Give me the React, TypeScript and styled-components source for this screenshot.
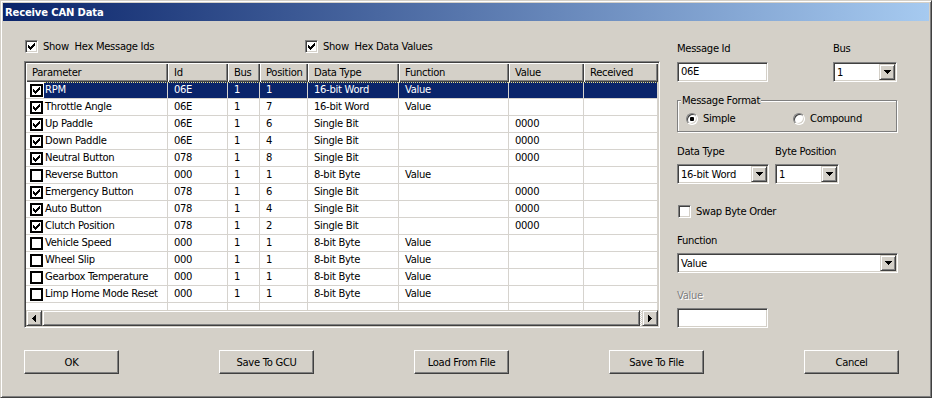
import React from "react";
import styled, { createGlobalStyle, css } from "styled-components";

const face = "#d4d0c8";
const shadow = "#808080";
const dark = "#404040";
const navy = "#0a246a";
const grid = "#d6d3ce";

const GlobalStyle = createGlobalStyle`
  html, body { margin: 0; padding: 0; background: ${face}; }
  body {
    font-family: "DejaVu Sans", "Liberation Sans", sans-serif;
    font-size: 10px;
    letter-spacing: -0.3px;
    color: #000;
  }
  * { box-sizing: border-box; }
`;

const raised = css`
  background: ${face};
  border: 1px solid;
  border-color: #fff ${dark} ${dark} #fff;
  box-shadow: inset -1px -1px 0 ${shadow};
`;

const sunken = css`
  background: #fff;
  border: 1px solid;
  border-color: ${shadow} #fff #fff ${shadow};
  box-shadow: inset 1px 1px 0 ${dark}, inset -1px -1px 0 ${face};
`;

const Window = styled.div`
  width: 932px;
  height: 398px;
  display: flex;
  flex-direction: column;
  padding: 2px;
  background: ${face};
  border: 1px solid;
  border-color: ${face} ${dark} ${dark} ${face};
  box-shadow: inset 1px 1px 0 #fff, inset -1px -1px 0 ${shadow};
`;

const TitleBar = styled.div`
  height: 18px;
  flex: none;
  display: flex;
  align-items: center;
  padding-left: 2px;
  background: linear-gradient(to right, ${navy}, #a6caf0);
  color: #fff;
  font-weight: bold;
  letter-spacing: -0.15px;
`;

const Body = styled.div`
  flex: 1;
  display: flex;
  flex-direction: column;
  padding: 19px 30px 0 21px;
`;

const Main = styled.div`
  display: flex;
  justify-content: space-between;
`;

const LeftCol = styled.div`
  width: 636px;
  display: flex;
  flex-direction: column;
`;

const OptionRow = styled.div`
  display: flex;
  align-items: center;
  height: 13px;
  margin-bottom: 8px;
  padding-left: 1px;
`;

const CheckLabel = styled.label<{ $width?: number }>`
  display: flex;
  align-items: center;
  gap: 5px;
  width: ${(p) => (p.$width ? `${p.$width}px` : "auto")};
  white-space: pre;
`;

const CheckBox = styled.span`
  width: 13px;
  height: 13px;
  flex: none;
  display: flex;
  align-items: center;
  justify-content: center;
  ${sunken};
`;

const FlatCheck = styled.span`
  width: 13px;
  height: 13px;
  flex: none;
  display: flex;
  align-items: center;
  justify-content: center;
  background: #fff;
  border: 2px solid #000;
`;

const ListView = styled.div`
  width: 636px;
  height: 267px;
  padding: 1px;
  display: flex;
  flex-direction: column;
  overflow: hidden;
  ${sunken};
`;

const Header = styled.div`
  display: flex;
  height: 19px;
  flex: none;
`;

const HeaderCell = styled.div<{ $w: number }>`
  width: ${(p) => p.$w}px;
  flex: none;
  line-height: 19px;
  padding-left: 6px;
  background: ${face};
  box-shadow: inset 1px 1px 0 #fff, inset -1px -1px 0 ${dark}, inset -2px -2px 0 ${shadow};
  white-space: nowrap;
  overflow: hidden;
`;

const Rows = styled.div`
  flex: 1;
  display: flex;
  flex-direction: column;
  background: #fff;
`;

const Row = styled.div<{ $focus?: boolean }>`
  display: flex;
  height: 17px;
  flex: none;
  position: relative;
  ${(p) =>
    p.$focus &&
    css`
      &::after {
        content: "";
        position: absolute;
        top: 0;
        left: 18px;
        right: 0;
        border-top: 1px dotted #e8e088;
      }
    `}
`;

const FillerRow = styled.div`
  display: flex;
  flex: 1;
`;

const Cell = styled.div<{ $w: number; $sel?: boolean; $filler?: boolean }>`
  width: ${(p) => p.$w}px;
  flex: none;
  padding-left: 6px;
  line-height: 16px;
  white-space: nowrap;
  overflow: hidden;
  border-right: 1px solid ${grid};
  border-bottom: ${(p) => (p.$filler ? "none" : `1px solid ${grid}`)};
  background: ${(p) => (p.$sel ? navy : "#fff")};
  color: ${(p) => (p.$sel ? "#fff" : "#000")};
`;

const ParamCell = styled.div`
  width: 142px;
  flex: none;
  display: flex;
  align-items: center;
  padding-left: 4px;
  background: #fff;
  border-right: 1px solid ${grid};
  border-bottom: 1px solid ${grid};
`;

const ParamText = styled.span<{ $sel?: boolean }>`
  flex: 1;
  height: 16px;
  line-height: 16px;
  margin-left: 1px;
  padding-left: 1px;
  white-space: nowrap;
  background: ${(p) => (p.$sel ? navy : "transparent")};
  color: ${(p) => (p.$sel ? "#fff" : "#000")};
`;

const HScroll = styled.div`
  height: 16px;
  flex: none;
  display: flex;
  background: repeating-conic-gradient(#fff 0 25%, ${face} 0 50%) 0 0 / 2px 2px;
`;

const ScrollPart = css`
  background: ${face};
  border: 1px solid;
  border-color: ${face} ${dark} ${dark} ${face};
  box-shadow: inset 1px 1px 0 #fff, inset -1px -1px 0 ${shadow};
`;

const ScrollButton = styled.div`
  width: 16px;
  height: 16px;
  flex: none;
  display: flex;
  align-items: center;
  justify-content: center;
  ${ScrollPart};
`;

const ScrollThumb = styled.div`
  flex: 1;
  margin-right: 2px;
  ${ScrollPart};
`;

const RightCol = styled.div`
  width: 222px;
  display: flex;
  flex-direction: column;
`;

const FieldRow = styled.div<{ $top: number }>`
  display: flex;
  margin-top: ${(p) => p.$top}px;
`;

const Field = styled.div<{ $w?: number }>`
  display: flex;
  flex-direction: column;
  width: ${(p) => (p.$w ? `${p.$w}px` : "auto")};
`;

const FieldLabel = styled.div<{ $gap?: number; $disabled?: boolean }>`
  line-height: 13px;
  margin-bottom: ${(p) => p.$gap ?? 6}px;
  color: ${(p) => (p.$disabled ? shadow : "#000")};
  text-shadow: ${(p) => (p.$disabled ? "1px 1px 0 #fff" : "none")};
`;

const TextBox = styled.div<{ $w: number }>`
  width: ${(p) => p.$w}px;
  height: 20px;
  padding-left: 3px;
  line-height: 18px;
  ${sunken};
`;

const Combo = styled.div<{ $w: number }>`
  width: ${(p) => p.$w}px;
  height: 20px;
  padding: 1px;
  display: flex;
  align-items: center;
  ${sunken};
`;

const ComboText = styled.span`
  flex: 1;
  padding-left: 2px;
  white-space: nowrap;
`;

const DropButton = styled(ScrollButton)``;

const GroupBox = styled.fieldset`
  width: 220px;
  margin: 12px 0 0;
  padding: 5px 0 6px 3px;
  border: 1px solid ${shadow};
  box-shadow: 1px 1px 0 #fff, inset 1px 1px 0 #fff;
`;

const GroupLegend = styled.legend`
  padding: 0 1px;
  line-height: 13px;
  background: ${face};
`;

const RadioRow = styled.div`
  display: flex;
  align-items: center;
  height: 13px;
  margin-left: 5px;
`;

const RadioLabel = styled.label<{ $width?: number }>`
  display: flex;
  align-items: center;
  gap: 5px;
  width: ${(p) => (p.$width ? `${p.$width}px` : "auto")};
`;

const Radio = styled.span`
  width: 12px;
  height: 12px;
  flex: none;
  border-radius: 50%;
  display: flex;
  align-items: center;
  justify-content: center;
  background: #fff;
  border: 1px solid;
  border-color: ${shadow} #fff #fff ${shadow};
  box-shadow: inset 1px 1px 0 ${dark}, inset -1px -1px 0 ${face};
`;

const RadioDot = styled.span`
  width: 4px;
  height: 4px;
  border-radius: 1px;
  background: #000;
`;

const SwapRow = styled.div`
  margin-top: 21px;
  height: 13px;
  display: flex;
  padding-left: 1px;
`;

const ButtonRow = styled.div`
  display: flex;
  justify-content: space-between;
  margin-top: 22px;
`;

const PushButton = styled.button`
  width: 95px;
  height: 24px;
  padding: 0;
  font: inherit;
  letter-spacing: inherit;
  color: #000;
  ${raised};
`;

function CheckMark() {
  const tops = [2, 3, 4, 3, 2, 1, 0];
  return (
    <svg width="7" height="7" viewBox="0 0 7 7" shapeRendering="crispEdges">
      {tops.map((t, i) => (
        <rect key={i} x={i} y={t} width="1" height="3" fill="#000" />
      ))}
    </svg>
  );
}

function Arrow({ dir }: { dir: "left" | "right" | "down" }) {
  const rects = [0, 1, 2, 3].map((i) => {
    if (dir === "down") return { x: i, y: i, w: 7 - 2 * i, h: 1 };
    if (dir === "left") return { x: i, y: 3 - i, w: 1, h: 2 * i + 1 };
    return { x: 3 - i, y: 3 - i, w: 1, h: 2 * i + 1 };
  });
  const w = dir === "down" ? 7 : 4;
  const h = dir === "down" ? 4 : 7;
  return (
    <svg width={w} height={h} viewBox={`0 0 ${w} ${h}`} shapeRendering="crispEdges">
      {rects.map((r, i) => (
        <rect key={i} x={r.x} y={r.y} width={r.w} height={r.h} fill="#000" />
      ))}
    </svg>
  );
}

const columns = [
  { title: "Parameter", width: 142 },
  { title: "Id", width: 60 },
  { title: "Bus", width: 32 },
  { title: "Position", width: 48 },
  { title: "Data Type", width: 91 },
  { title: "Function", width: 110 },
  { title: "Value", width: 75 },
  { title: "Received", width: 74 },
];

// checked, parameter, id, bus, position, data type, function, value, received
type Item = [boolean, string, string, string, string, string, string, string, string];

const items: Item[] = [
  [true, "RPM", "06E", "1", "1", "16-bit Word", "Value", "", ""],
  [true, "Throttle Angle", "06E", "1", "7", "16-bit Word", "Value", "", ""],
  [true, "Up Paddle", "06E", "1", "6", "Single Bit", "", "0000", ""],
  [true, "Down Paddle", "06E", "1", "4", "Single Bit", "", "0000", ""],
  [true, "Neutral Button", "078", "1", "8", "Single Bit", "", "0000", ""],
  [false, "Reverse Button", "000", "1", "1", "8-bit Byte", "Value", "", ""],
  [true, "Emergency Button", "078", "1", "6", "Single Bit", "", "0000", ""],
  [true, "Auto Button", "078", "1", "4", "Single Bit", "", "0000", ""],
  [true, "Clutch Position", "078", "1", "2", "Single Bit", "", "0000", ""],
  [false, "Vehicle Speed", "000", "1", "1", "8-bit Byte", "Value", "", ""],
  [false, "Wheel Slip", "000", "1", "1", "8-bit Byte", "Value", "", ""],
  [false, "Gearbox Temperature", "000", "1", "1", "8-bit Byte", "Value", "", ""],
  [false, "Limp Home Mode Reset", "000", "1", "1", "8-bit Byte", "Value", "", ""],
];

export default function App() {
  return (
    <>
      <GlobalStyle />
      <Window>
        <TitleBar>Receive CAN Data</TitleBar>
        <Body>
          <Main>
            <LeftCol>
              <OptionRow>
                <CheckLabel $width={280}>
                  <CheckBox>
                    <CheckMark />
                  </CheckBox>
                  {"Show  Hex Message Ids"}
                </CheckLabel>
                <CheckLabel>
                  <CheckBox>
                    <CheckMark />
                  </CheckBox>
                  {"Show  Hex Data Values"}
                </CheckLabel>
              </OptionRow>
              <ListView>
                <Header>
                  {columns.map((c) => (
                    <HeaderCell key={c.title} $w={c.width}>
                      {c.title}
                    </HeaderCell>
                  ))}
                </Header>
                <Rows>
                  {items.map((item, r) => {
                    const sel = r === 0;
                    const [checked, name, ...rest] = item;
                    return (
                      <Row key={name} $focus={sel}>
                        <ParamCell>
                          <FlatCheck>{checked && <CheckMark />}</FlatCheck>
                          <ParamText $sel={sel}>{name}</ParamText>
                        </ParamCell>
                        {rest.map((v, i) => (
                          <Cell key={i} $w={columns[i + 1].width} $sel={sel}>
                            {v}
                          </Cell>
                        ))}
                      </Row>
                    );
                  })}
                  <FillerRow>
                    {columns.map((c) => (
                      <Cell key={c.title} $w={c.width} $filler />
                    ))}
                  </FillerRow>
                </Rows>
                <HScroll>
                  <ScrollButton>
                    <Arrow dir="left" />
                  </ScrollButton>
                  <ScrollThumb />
                  <ScrollButton>
                    <Arrow dir="right" />
                  </ScrollButton>
                </HScroll>
              </ListView>
            </LeftCol>

            <RightCol>
              <FieldRow $top={2}>
                <Field $w={156}>
                  <FieldLabel $gap={7}>Message Id</FieldLabel>
                  <TextBox $w={91}>06E</TextBox>
                </Field>
                <Field>
                  <FieldLabel $gap={7}>Bus</FieldLabel>
                  <Combo $w={64}>
                    <ComboText>1</ComboText>
                    <DropButton>
                      <Arrow dir="down" />
                    </DropButton>
                  </Combo>
                </Field>
              </FieldRow>

              <GroupBox>
                <GroupLegend>Message Format</GroupLegend>
                <RadioRow>
                  <RadioLabel $width={107}>
                    <Radio>
                      <RadioDot />
                    </Radio>
                    Simple
                  </RadioLabel>
                  <RadioLabel>
                    <Radio />
                    Compound
                  </RadioLabel>
                </RadioRow>
              </GroupBox>

              <FieldRow $top={13}>
                <Field $w={98}>
                  <FieldLabel>Data Type</FieldLabel>
                  <Combo $w={92}>
                    <ComboText>16-bit Word</ComboText>
                    <DropButton>
                      <Arrow dir="down" />
                    </DropButton>
                  </Combo>
                </Field>
                <Field>
                  <FieldLabel>Byte Position</FieldLabel>
                  <Combo $w={64}>
                    <ComboText>1</ComboText>
                    <DropButton>
                      <Arrow dir="down" />
                    </DropButton>
                  </Combo>
                </Field>
              </FieldRow>

              <SwapRow>
                <CheckLabel>
                  <CheckBox />
                  Swap Byte Order
                </CheckLabel>
              </SwapRow>

              <FieldRow $top={16}>
                <Field>
                  <FieldLabel>Function</FieldLabel>
                  <Combo $w={221}>
                    <ComboText>Value</ComboText>
                    <DropButton>
                      <Arrow dir="down" />
                    </DropButton>
                  </Combo>
                </Field>
              </FieldRow>

              <FieldRow $top={16}>
                <Field>
                  <FieldLabel $disabled>Value</FieldLabel>
                  <TextBox $w={91} />
                </Field>
              </FieldRow>
            </RightCol>
          </Main>

          <ButtonRow>
            <PushButton>OK</PushButton>
            <PushButton>Save To GCU</PushButton>
            <PushButton>Load From File</PushButton>
            <PushButton>Save To File</PushButton>
            <PushButton>Cancel</PushButton>
          </ButtonRow>
        </Body>
      </Window>
    </>
  );
}
